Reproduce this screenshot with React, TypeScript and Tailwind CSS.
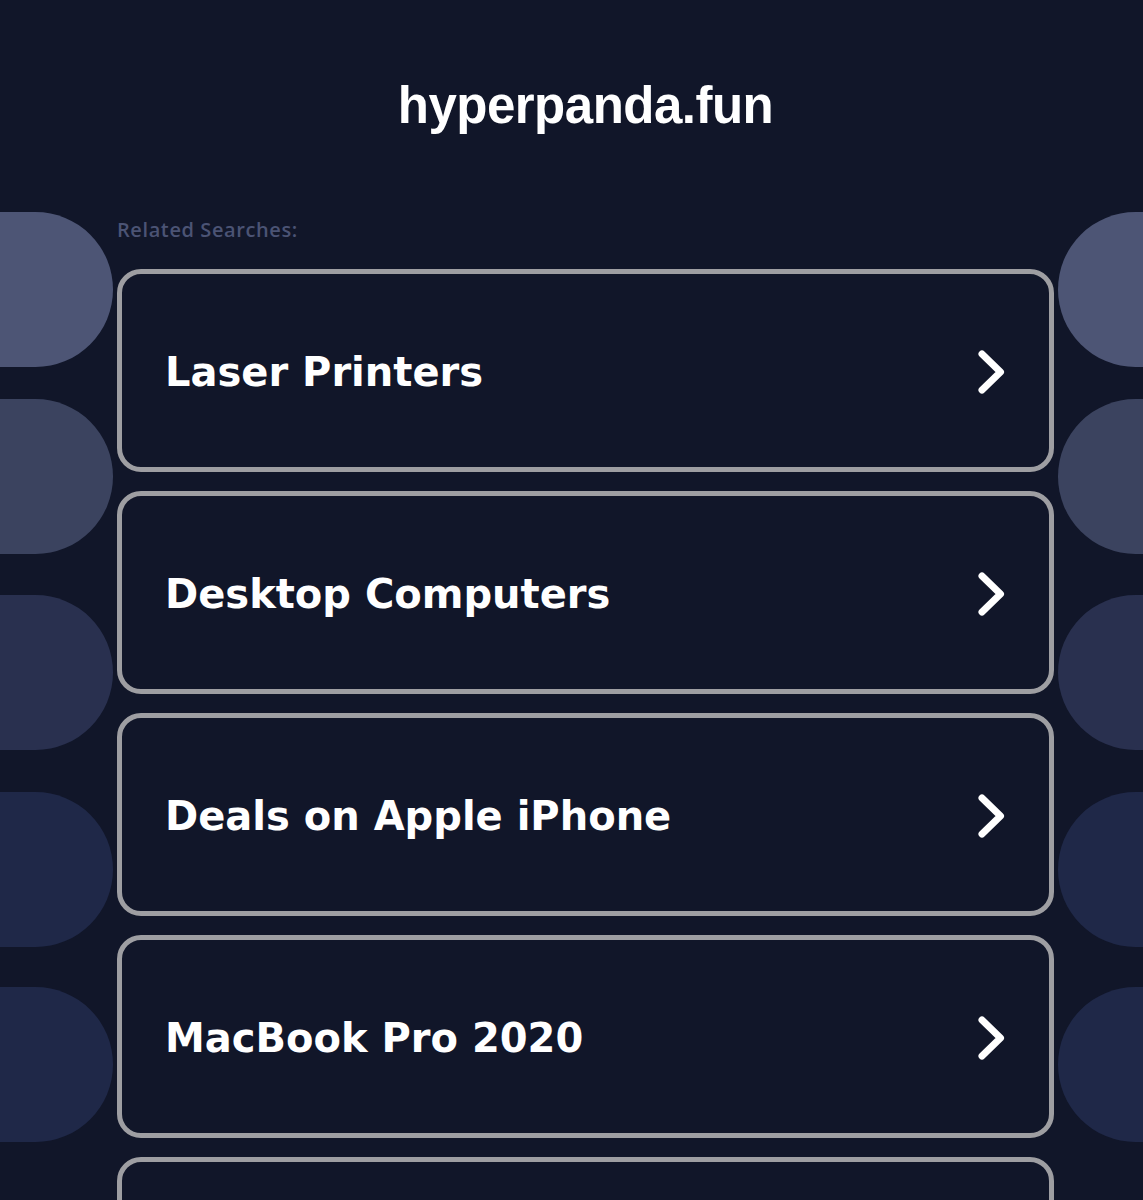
import React from "react";

const items = [
  "Laser Printers",
  "Desktop Computers",
  "Deals on Apple iPhone",
  "MacBook Pro 2020",
  "Cheap Laptops",
];

const blobs = [
  "mt-0 bg-[#4d5575]",
  "mt-[32px] bg-[#3b435f]",
  "mt-[41px] bg-[#29304f]",
  "mt-[42px] bg-[#1f2848]",
  "mt-[40px] bg-[#1f2848]",
];

function Chevron() {
  return (
    <svg width="32" height="48" viewBox="0 0 32 48" fill="none" className="shrink-0">
      <path d="M6 6 L24.5 24 L6 42" stroke="#ffffff" strokeWidth="7" strokeLinecap="round" strokeLinejoin="round" />
    </svg>
  );
}

export default function App() {
  return (
    <div className="min-h-screen w-full overflow-hidden bg-[#111629]">
      <header className="h-[212px] pt-[80px] pl-[28px] flex justify-center">
        <h1
          className="text-[51px] leading-none font-bold text-white tracking-[-0.5px]"
          style={{ fontFamily: '"Liberation Sans", Arial, sans-serif' }}
        >
          hyperpanda.fun
        </h1>
      </header>
      <div className="flex flex-row gap-[4px]">
        <div className="w-[113px] shrink-0 flex flex-col">
          {blobs.map((c, i) => (
            <div key={i} className={`h-[155px] w-[113px] shrink-0 rounded-r-full ${c}`} />
          ))}
        </div>
        <main className="w-[937px] shrink-0 flex flex-col">
          <p
            className="mt-[8px] text-[20px] leading-none font-semibold tracking-[0.6px] text-[#4b5374]"
            style={{ fontFamily: '"Open Sans", "Noto Sans", sans-serif' }}
          >
            Related Searches:
          </p>
          <div className="mt-[29px] flex flex-col gap-[19px]">
            {items.map((t) => (
              <div
                key={t}
                className="h-[203px] rounded-[24px] border-[5px] border-[#9e9ea2] flex items-center justify-between pl-[43px] pr-[41px] pt-[2px]"
              >
                <span
                  className="text-[40px] leading-none font-bold text-white"
                  style={{ fontFamily: '"DejaVu Sans", Verdana, sans-serif' }}
                >
                  {t}
                </span>
                <Chevron />
              </div>
            ))}
          </div>
        </main>
        <div className="flex-1 min-w-0 overflow-hidden flex flex-col">
          {blobs.map((c, i) => (
            <div key={i} className={`h-[155px] w-[200px] shrink-0 rounded-l-full ${c}`} />
          ))}
        </div>
      </div>
    </div>
  );
}
